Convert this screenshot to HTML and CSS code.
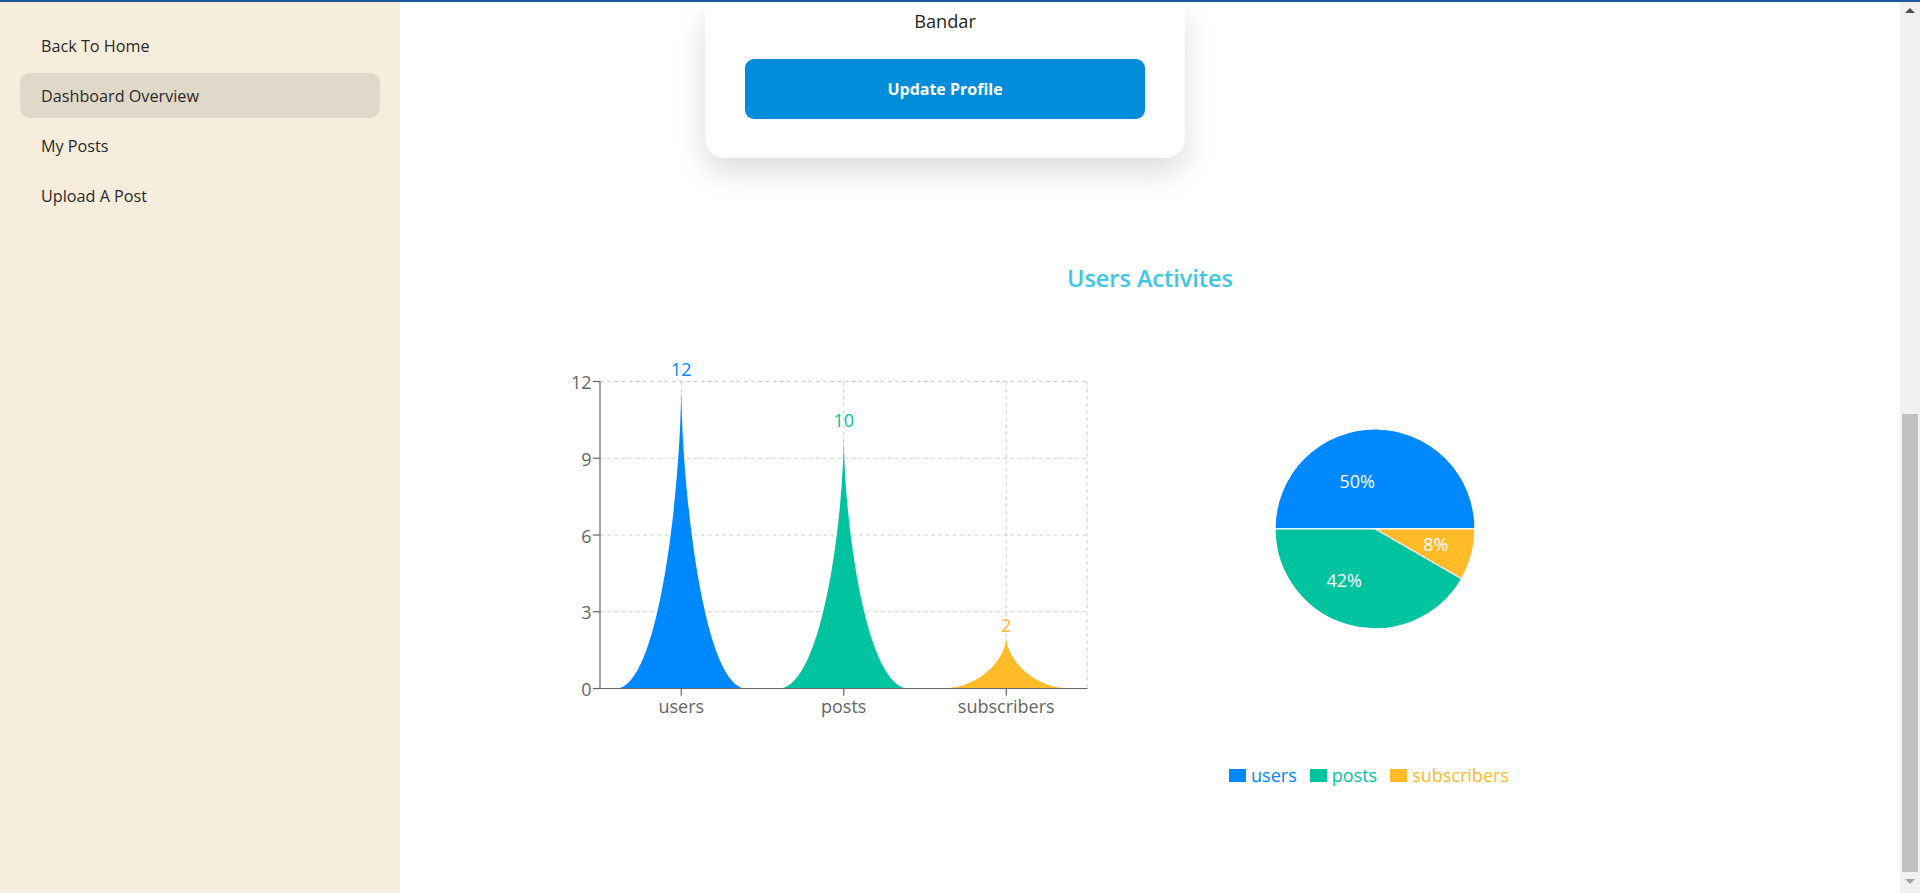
FILE: index.html
```html
<!DOCTYPE html>
<html lang="en">
<head>
<meta charset="utf-8">
<title>Dashboard Overview</title>
<link rel="stylesheet" href="styles.css">
</head>
<body>
<div class="app">
  <aside class="sidebar">
    <nav class="nav">
      <a class="nav-item" href="#">Back To Home</a>
      <a class="nav-item active" href="#">Dashboard Overview</a>
      <a class="nav-item" href="#">My Posts</a>
      <a class="nav-item" href="#">Upload A Post</a>
    </nav>
  </aside>
  <main class="main">
    <div class="profile-row">
      <div class="card">
        <p class="name">Bandar</p>
        <button class="btn" type="button">Update Profile</button>
      </div>
    </div>
    <h2 class="title">Users Activites</h2>
    <div class="charts">
      <div class="bar-chart">
        <svg width="600" height="400" viewBox="0 0 600 400" class="chart-svg">
          <g class="grid" stroke="#cccccc" stroke-width="1" stroke-dasharray="3.6 3.6" fill="none">
            <line x1="100" y1="41.5" x2="587.5" y2="41.5"/>
            <line x1="100" y1="118.25" x2="587.5" y2="118.25"/>
            <line x1="100" y1="195" x2="587.5" y2="195"/>
            <line x1="100" y1="271.75" x2="587.5" y2="271.75"/>
            <line x1="181.25" y1="41.5" x2="181.25" y2="348.5"/>
            <line x1="343.75" y1="41.5" x2="343.75" y2="348.5"/>
            <line x1="506.25" y1="41.5" x2="506.25" y2="348.5"/>
            <line x1="587" y1="41.5" x2="587" y2="348.5"/>
          </g>
          <path fill="#0088FE" d="M116.25,348.5 C159.58,348.5 181.25,143.83 181.25,41.5 C181.25,143.83 202.92,348.5 246.25,348.5 Z"/>
          <path fill="#00C49F" d="M278.75,348.5 C322.08,348.5 343.75,177.95 343.75,92.67 C343.75,177.95 365.42,348.5 408.75,348.5 Z"/>
          <path fill="#FFBB28" d="M441.25,348.5 C484.58,348.5 506.25,314.39 506.25,297.33 C506.25,314.39 527.92,348.5 571.25,348.5 Z"/>
          <g stroke="#666666" stroke-width="1.2" fill="none">
            <line x1="100" y1="41.5" x2="100" y2="348.5"/>
            <line x1="100" y1="348.5" x2="587.5" y2="348.5"/>
            <line x1="92.8" y1="41.5" x2="100" y2="41.5"/>
            <line x1="92.8" y1="118.25" x2="100" y2="118.25"/>
            <line x1="92.8" y1="195" x2="100" y2="195"/>
            <line x1="92.8" y1="271.75" x2="100" y2="271.75"/>
            <line x1="92.8" y1="348.5" x2="100" y2="348.5"/>
            <line x1="181.25" y1="348.5" x2="181.25" y2="355.7"/>
            <line x1="343.75" y1="348.5" x2="343.75" y2="355.7"/>
            <line x1="506.25" y1="348.5" x2="506.25" y2="355.7"/>
          </g>
          <g class="tick" text-anchor="end">
            <text x="91.5" y="42" dominant-baseline="central">12</text>
            <text x="91.5" y="118.75" dominant-baseline="central">9</text>
            <text x="91.5" y="195.5" dominant-baseline="central">6</text>
            <text x="91.5" y="272.25" dominant-baseline="central">3</text>
            <text x="91.5" y="349" dominant-baseline="central">0</text>
          </g>
          <g class="tick" text-anchor="middle">
            <text x="181.25" y="366" dominant-baseline="central">users</text>
            <text x="343.75" y="366" dominant-baseline="central">posts</text>
            <text x="506.25" y="366" dominant-baseline="central">subscribers</text>
          </g>
          <g class="value" text-anchor="middle">
            <text x="181.25" y="29" dominant-baseline="central" fill="#0088FE">12</text>
            <text x="343.75" y="80" dominant-baseline="central" fill="#00C49F">10</text>
            <text x="506.25" y="285" dominant-baseline="central" fill="#FFBB28">2</text>
          </g>
        </svg>
      </div>
      <div class="pie-chart">
        <svg width="480" height="400" viewBox="0 0 480 400" class="chart-svg">
          <g stroke="#ffffff" stroke-width="1.2">
            <path fill="#0088FE" d="M240,188.8 L340,188.8 A100,100 0 0,0 140,188.8 Z"/>
            <path fill="#00C49F" d="M240,188.8 L140,188.8 A100,100 0 0,0 326.6,238.8 Z"/>
            <path fill="#FFBB28" d="M240,188.8 L326.6,238.8 A100,100 0 0,0 340,188.8 Z"/>
          </g>
          <g class="pie-label" fill="#ffffff">
            <text x="240" y="141" text-anchor="end" dominant-baseline="central">50%</text>
            <text x="227" y="239.5" text-anchor="end" dominant-baseline="central">42%</text>
            <text x="288.3" y="204" text-anchor="start" dominant-baseline="central">8%</text>
          </g>
        </svg>
        <ul class="legend">
          <li class="legend-item users"><span class="swatch"></span>users</li>
          <li class="legend-item posts"><span class="swatch"></span>posts</li>
          <li class="legend-item subs"><span class="swatch"></span>subscribers</li>
        </ul>
      </div>
    </div>
  </main>
  <div class="scrollbar">
    <span class="arrow up"></span>
    <div class="thumb"></div>
    <span class="arrow down"></span>
  </div>
</div>
</body>
</html>
```

FILE: styles.css
```css
* { box-sizing: border-box; }

html, body {
  margin: 0;
  padding: 0;
  background: #ffffff;
  font-family: "Open Sans", "Noto Sans", "Liberation Sans", sans-serif;
}

.app {
  display: flex;
  height: 893px;
  border-top: 2px solid #1c58a0;
  overflow: hidden;
}

/* Sidebar */
.sidebar {
  width: 400px;
  flex: 0 0 400px;
  background: #f7eddd;
  padding-top: 21px;
}

.nav {
  display: flex;
  flex-direction: column;
  gap: 5px;
}

.nav-item {
  display: flex;
  align-items: center;
  height: 45px;
  margin: 0 20px;
  padding-left: 21px;
  border-radius: 10px;
  color: #2a2a2a;
  text-decoration: none;
  font-size: 16.2px;
}

.nav-item.active {
  background: #e0d8c8;
}

/* Main */
.main {
  flex: 1;
  display: flex;
  flex-direction: column;
  min-width: 0;
}

.profile-row {
  display: flex;
  padding-left: 305px;
}

.card {
  width: 480px;
  background: #ffffff;
  padding: 6px 40px 39px;
  border-radius: 0 0 20px 20px;
  box-shadow: 0 14px 32px rgba(0, 0, 0, 0.14);
  display: flex;
  flex-direction: column;
  align-items: stretch;
}

.name {
  margin: 0;
  text-align: center;
  font-size: 18.2px;
  line-height: 26px;
  color: #1f1f1f;
}

.btn {
  margin-top: 25px;
  height: 60px;
  width: 100%;
  border: none;
  border-radius: 9px;
  background: #028cd9;
  color: #ffffff;
  font-family: "Open Sans", "Noto Sans", sans-serif;
  font-weight: 700;
  font-size: 16px;
}

.title {
  margin: 104px 0 46px;
  text-align: center;
  font-size: 23.4px;
  line-height: 32px;
  font-weight: 600;
  color: #3ec6e6;
}

.charts {
  display: flex;
  padding-left: 100px;
  gap: 35px;
}

.chart-svg {
  display: block;
  overflow: visible;
}

.tick text {
  font-family: "Open Sans", "Noto Sans", sans-serif;
  font-size: 18px;
  fill: #666666;
}

.value text {
  font-family: "Open Sans", "Noto Sans", sans-serif;
  font-size: 18px;
}

.pie-label text {
  font-family: "Open Sans", "Noto Sans", sans-serif;
  font-size: 18px;
}

.pie-chart {
  width: 480px;
  display: flex;
  flex-direction: column;
}

.legend {
  list-style: none;
  margin: 23px 0 0;
  padding: 0 12px 0 0;
  display: flex;
  justify-content: center;
  gap: 13px;
}

.legend-item {
  display: flex;
  align-items: center;
  gap: 5px;
  font-size: 18px;
  line-height: 24px;
}

.swatch {
  width: 17px;
  height: 13px;
  display: inline-block;
}

.legend-item.users { color: #0088FE; }
.legend-item.posts { color: #00C49F; }
.legend-item.subs { color: #FFBB28; }
.users .swatch { background: #0088FE; }
.posts .swatch { background: #00C49F; }
.subs .swatch { background: #FFBB28; }

/* Fake scrollbar */
.scrollbar {
  width: 20px;
  flex: 0 0 20px;
  background: #f1f1f1;
  display: flex;
  flex-direction: column;
  align-items: center;
}

.arrow {
  width: 0;
  height: 0;
  border-left: 5px solid transparent;
  border-right: 5px solid transparent;
}

.arrow.up {
  margin-top: 6px;
  border-bottom: 5px solid #505050;
}

.arrow.down {
  margin-top: 7px;
  margin-bottom: 9px;
  border-top: 5px solid #a3a3a3;
}

.thumb {
  margin-top: auto;
  width: 16px;
  height: 458px;
  flex: 0 0 458px;
  background: #c1c1c1;
}
```
